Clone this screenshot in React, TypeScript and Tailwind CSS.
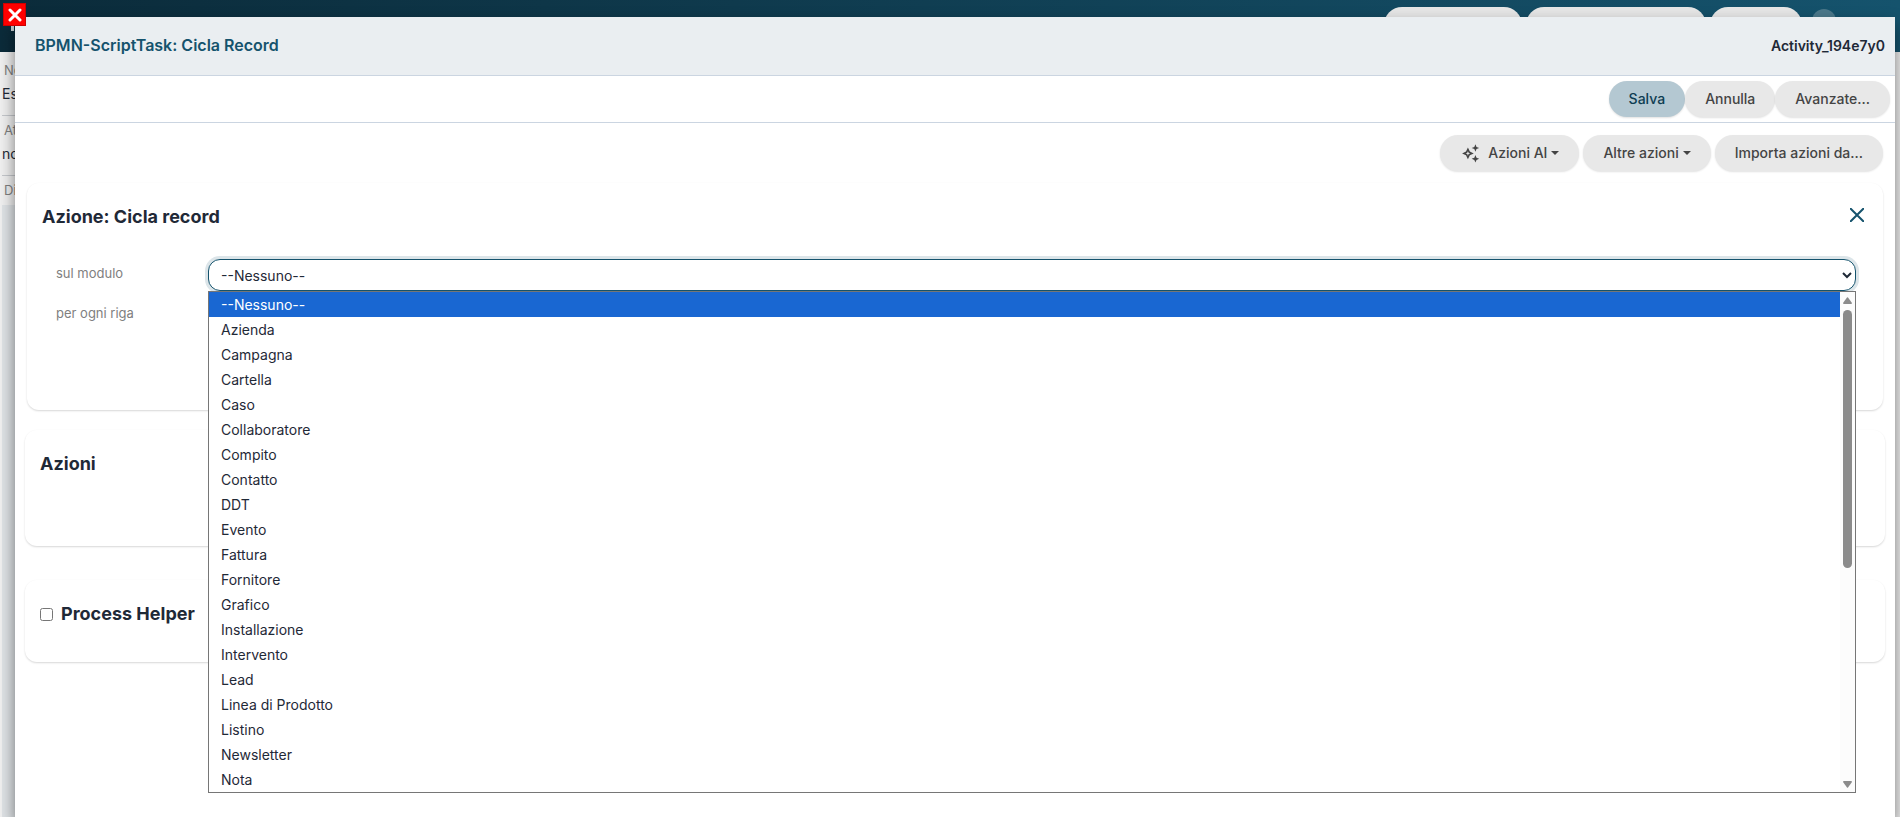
import { useState } from "react";

const modules = [
  "--Nessuno--",
  "Azienda",
  "Campagna",
  "Cartella",
  "Caso",
  "Collaboratore",
  "Compito",
  "Contatto",
  "DDT",
  "Evento",
  "Fattura",
  "Fornitore",
  "Grafico",
  "Installazione",
  "Intervento",
  "Lead",
  "Linea di Prodotto",
  "Listino",
  "Newsletter",
  "Nota",
];

const pill =
  "flex h-9 items-center rounded-full px-5 text-sm font-medium shadow-[0_1px_2px_rgba(0,0,0,0.12)]";

function SparkleIcon() {
  return (
    <svg viewBox="0 0 24 24" className="mr-2 size-5" fill="#444">
      <path
        fillRule="evenodd"
        d="M9.500 5.500 11.800 10.200 16.500 12.500 11.800 14.800 9.500 19.500 7.200 14.800 2.500 12.500 7.200 10.200ZM9.500 9.800 8.700 11.700 6.800 12.500 8.700 13.300 9.500 15.200 10.300 13.300 12.200 12.500 10.300 11.700Z"
      />
      <path d="M18.500 1.500 19.800 4.700 23 6 19.800 7.300 18.500 10.500 17.200 7.300 14 6 17.200 4.700ZM18.500 14.500 19.800 17.700 23 19 19.800 20.300 18.500 23.500 17.200 20.300 14 19 17.200 17.700Z" />
    </svg>
  );
}

function Caret() {
  return (
    <svg viewBox="0 0 8 4" className="ml-1 h-1 w-2" fill="#444">
      <path d="M0 0h8L4 4z" />
    </svg>
  );
}

function Backdrop() {
  return (
    <div className="absolute inset-0 bg-[#f0f0f0]">
      <div className="flex h-13 items-start bg-linear-to-r from-[#0b2b3a] to-[#15536d] pt-[7px] pr-16 pl-[11px]">
        <div className="mt-4 mr-auto h-2 w-[3px] bg-[#c9d1d5]" />
        <div className="flex items-start gap-1">
          <div className="h-9 w-[138px] rounded-full bg-[#e6e6e6]" />
          <div className="h-9 w-[180px] rounded-full bg-[#e6e6e6]" />
          <div className="h-9 w-[92px] rounded-full bg-[#e6e6e6]" />
          <div className="mt-0.5 ml-1.5 size-6 rounded-full bg-[#4b788a]" />
        </div>
      </div>
      <div className="w-60 pl-0.5 text-sm">
        <div className="h-16 border-b border-[#c5c8cc] pt-2">
          <p className="pl-0.5 text-[13px] leading-5 text-[#808080]">No</p>
          <p className="mt-1 text-[#1f2937]">Es</p>
        </div>
        <div className="h-[60px] border-b border-[#c5c8cc] pt-1">
          <p className="pl-0.5 text-[13px] leading-5 text-[#808080]">At</p>
          <p className="mt-1 text-[#1f2937]">no</p>
        </div>
        <p className="h-[29px] pt-1 pl-0.5 text-[13px] leading-5 text-[#808080]">Di</p>
      </div>
      <div className="ml-0.5 h-full w-60 bg-[#dfe3e6]" />
    </div>
  );
}

function ModuleList({ selected, onSelect }: { selected: string; onSelect: (name: string) => void }) {
  return (
    <div className="absolute top-full right-0 left-0 z-10 flex border border-[#767676] bg-white">
      <ul role="listbox" aria-label="sul modulo" className="flex-1">
        {modules.map((name) => (
          <li
            key={name}
            role="option"
            aria-selected={name === selected}
            onClick={() => onSelect(name)}
            className={`h-[25px] pl-3 text-sm leading-[25px] ${
              name === selected ? "bg-[#1967d2] text-white" : "text-[#1f2937]"
            }`}
          >
            {name}
          </li>
        ))}
      </ul>
      <div className="flex w-[15px] flex-col items-center bg-[#fcfcfc] pt-[5px] pb-1">
        <svg viewBox="0 0 9 7" className="h-[7px] w-[9px]" fill="#8b8b8b">
          <path d="M4 .5Q4.500 0 5 .5L9 6Q9 7 8 7H1Q0 7 0 6Z" />
        </svg>
        <div className="mt-1.5 h-[258px] w-[9px] rounded-full bg-[#8b8b8b]" />
        <svg viewBox="0 0 9 7" className="mt-auto h-[7px] w-[9px]" fill="#8b8b8b">
          <path d="M4 6.500Q4.500 7 5 6.500L9 1Q9 0 8 0H1Q0 0 0 1Z" />
        </svg>
      </div>
    </div>
  );
}

export default function App() {
  const [module, setModule] = useState("--Nessuno--");
  const [helper, setHelper] = useState(false);

  return (
    <div className="relative h-screen overflow-hidden font-['Inter',sans-serif] text-[#1f2937]">
      <Backdrop />

      <div className="relative flex h-full pt-[17px] pr-[5px] pl-[15px]">
        <div className="flex-1 rounded-t-sm bg-white shadow-[0_8px_16px_rgba(0,0,0,0.5)]">
          <header className="flex h-[59px] items-center justify-between border-b border-[#cbd5e1] bg-[#eaeef1] pr-2.5 pl-5">
            <h1 className="pb-0.5 text-base font-semibold text-[#15536d]">BPMN-ScriptTask: Cicla Record</h1>
            <span className="text-sm font-semibold">Activity_194e7y0</span>
          </header>

          <div className="flex h-[47px] items-center justify-end border-b border-[#cbd5e1] pr-[5px]">
            <button className={`${pill} bg-[#b4c8d2] text-[#0f3d52]`}>Salva</button>
            <button className={`${pill} bg-[#e8e8e8] text-[#444]`}>Annulla</button>
            <button className={`${pill} bg-[#e8e8e8] text-[#444]`}>Avanzate...</button>
          </div>

          <div className="flex justify-end gap-1 pt-3 pr-3">
            <button className={`${pill} bg-[#e8e8e8] text-[#444]`}>
              <SparkleIcon />
              Azioni AI
              <Caret />
            </button>
            <button className={`${pill} bg-[#e8e8e8] text-[#444]`}>
              Altre azioni
              <Caret />
            </button>
            <button className={`${pill} bg-[#e8e8e8] text-[#444]`}>Importa azioni da...</button>
          </div>

          <section className="mx-3 mt-3 h-[227px] rounded-xl px-[15px] pt-5 shadow-[0_1px_2px_rgba(0,0,0,0.16)]">
            <div className="flex items-center justify-between pr-1">
              <h2 className="text-lg font-bold">Azione: Cicla record</h2>
              <button aria-label="Chiudi" className="pb-1">
                <svg viewBox="0 0 14 14" className="size-[14px]" stroke="#15536d" strokeWidth="2">
                  <path d="M0 0l14 14M14 0L0 14" />
                </svg>
              </button>
            </div>
            <div className="mt-7 flex pr-3 pl-3.5">
              <label htmlFor="module" className="w-[152px] pt-1 text-[13px] leading-5 text-[#808080]">
                sul modulo
              </label>
              <div className="relative flex-1">
                <select
                  id="module"
                  value={module}
                  onChange={(e) => setModule(e.target.value)}
                  className="block h-8 w-full rounded-xl border border-[#15536d] bg-white pl-2 text-sm shadow-[0_0_0_3px_#dce5e9] outline-none"
                >
                  {modules.map((name) => (
                    <option key={name}>{name}</option>
                  ))}
                </select>
                <ModuleList selected={module} onSelect={setModule} />
              </div>
            </div>
            <p className="mt-3 pl-3.5 text-[13px] leading-5 text-[#808080]">per ogni riga</p>
          </section>

          <section className="mx-2.5 mt-5 h-[116px] rounded-xl px-[15px] pt-5 shadow-[0_1px_2px_rgba(0,0,0,0.16)]">
            <h2 className="text-lg font-bold">Azioni</h2>
          </section>

          <section className="mx-2.5 mt-[34px] h-[82px] rounded-xl px-[15px] pt-5 shadow-[0_1px_2px_rgba(0,0,0,0.16)]">
            <label className="flex items-center gap-2 text-lg font-bold">
              <input type="checkbox" checked={helper} onChange={(e) => setHelper(e.target.checked)} />
              Process Helper
            </label>
          </section>
        </div>
      </div>

      <button
        aria-label="Chiudi finestra"
        className="absolute top-[3px] left-[3px] flex size-[23px] items-center justify-center border border-[#c00] bg-[#f00]"
      >
        <svg viewBox="0 0 14 14" className="size-[14px]" stroke="#fff" strokeWidth="3" strokeLinecap="round">
          <path d="M2 2l10 10M12 2L2 12" />
        </svg>
      </button>
    </div>
  );
}
